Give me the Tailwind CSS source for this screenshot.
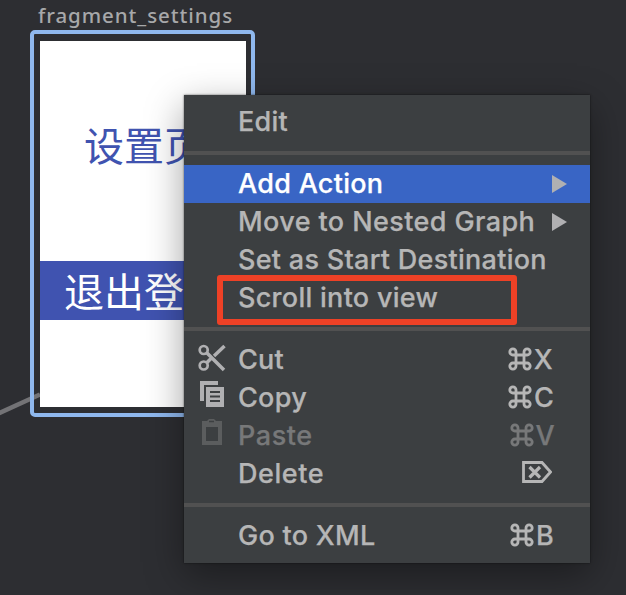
<!DOCTYPE html>
<html lang="en">
<head>
<meta charset="utf-8">
<title>Navigation editor</title>
<script src="https://cdn.jsdelivr.net/npm/@tailwindcss/browser@4"></script>
</head>
<body class="relative h-[595px] w-[626px] overflow-hidden bg-[#2d2e32] font-['Inter','Noto_Sans_CJK_SC',sans-serif]">
<svg class="hidden">
  <symbol id="cmd" viewBox="0 0 24 24"><path d="M8 8V4.900A3.100 3.100 0 1 0 4.900 8H19.100A3.100 3.100 0 1 0 16 4.900V19.100A3.100 3.100 0 1 0 19.100 16H4.900A3.100 3.100 0 1 0 8 19.100Z" fill="none" stroke="currentColor" stroke-width="2.800"/></symbol>
</svg>

<!-- action edge entering the destination -->
<svg class="absolute left-0 top-[380px] h-[50px] w-[50px]" viewBox="0 0 50 50"><path d="M-4 34.500L40 14.500" stroke="#737376" stroke-width="4.500" fill="none"/></svg>

<!-- destination -->
<div class="absolute left-[38px] top-0 h-[30px] whitespace-nowrap font-['Noto_Sans',sans-serif] text-[20.500px] font-medium leading-[30px] tracking-[0.930px] text-[#a7a8aa]">fragment_settings</div>
<div class="absolute left-[30px] top-[30px] h-[387px] w-[225px] rounded-[5px] border-[4px] border-[#8fb8ee] px-[6px] pt-[7px]">
  <div class="flex h-[366px] w-[206px] flex-col overflow-hidden bg-white pt-[80px] font-['Noto_Sans_CJK_SC',sans-serif] text-[40px]">
    <div class="h-[48px] whitespace-nowrap pl-[44px] leading-[46px] text-[#4053b0]">设置页</div>
    <div class="mt-[92px] h-[59px] whitespace-nowrap bg-[#4053b0] pl-[24px] leading-[59px] text-white">退出登录</div>
  </div>
</div>

<!-- context menu -->
<div class="absolute left-[184px] top-[95px] flex h-[468px] w-[406px] flex-col bg-[#3c3f41] py-2 text-[27px] font-medium tracking-[0.280px] text-[#b6b6b6] shadow-[0_12px_36px_rgba(0,0,0,0.38),0_0_2px_rgba(0,0,0,0.6)] [-webkit-text-stroke:0.25px_currentColor]">
  <div class="flex h-[38px] items-center pl-[54px]"><span class="whitespace-nowrap">Edit</span></div>
  <div class="my-[10px] h-1 bg-[#515151]"></div>
  <div class="flex h-[38px] items-center bg-[#3965c5] pl-[54px] pr-[23px] text-white"><span class="whitespace-nowrap">Add Action</span>
    <svg class="ml-auto h-[18px] w-[15px]" viewBox="0 0 15 18"><path d="M0 0L15 9L0 18Z" fill="#b0b0b2"/></svg></div>
  <div class="flex h-[38px] items-center pl-[54px] pr-[23px]"><span class="whitespace-nowrap tracking-[0.400px]">Move to Nested Graph</span>
    <svg class="ml-auto h-[18px] w-[15px]" viewBox="0 0 15 18"><path d="M0 0L15 9L0 18Z" fill="#b0b0b2"/></svg></div>
  <div class="flex h-[38px] items-center pl-[54px]"><span class="whitespace-nowrap">Set as Start Destination</span></div>
  <div class="flex h-[38px] items-center pl-[54px]"><span class="whitespace-nowrap">Scroll into view</span></div>
  <div class="my-[10px] h-1 bg-[#515151]"></div>
  <div class="flex h-[38px] items-center pl-[14px] pr-[37px]">
    <svg class="mb-[5px] mr-[12px] h-[28px] w-[28px] shrink-0" viewBox="0 0 28 28" fill="none" stroke="#b0b0b2"><circle cx="5.700" cy="6" r="4" stroke-width="2.700"/><circle cx="5.700" cy="21.500" r="4" stroke-width="2.700"/><path d="M8.500 8.500L26 26M8.500 19L13 14.500M16 12L26.500 2" stroke-width="3.500"/></svg>
    <span>Cut</span><svg class="mb-[2px] ml-auto mr-[2px] h-[24px] w-[24px]"><use href="#cmd"/></svg><span>X</span></div>
  <div class="flex h-[38px] items-center pl-[14px] pr-[36px]">
    <svg class="mb-[6px] mr-[12px] h-[28px] w-[28px] shrink-0" viewBox="0 0 28 28"><path d="M2 0H20V4H6V20H2Z" fill="#b0b0b2"/><path d="M8 6H26V26H8Z" fill="#b0b0b2"/><path d="M12 11H22M12 15.500H22M12 20H22" stroke="#3c3f41" stroke-width="2"/></svg>
    <span>Copy</span><svg class="mb-[2px] ml-auto mr-[2px] h-[24px] w-[24px]"><use href="#cmd"/></svg><span>C</span></div>
  <div class="flex h-[38px] items-center pl-[14px] pr-[35px] text-[#777879]">
    <svg class="mb-[6px] mr-[12px] h-[28px] w-[28px] shrink-0" viewBox="0 0 28 28"><path d="M4 2H9L11 0H16L18 2H24V26H4ZM8 8V22H20V8Z" fill="#5b5d5e" fill-rule="evenodd"/><path d="M11 2.500H16" stroke="#3c3f41" stroke-width="1.500"/></svg>
    <span class="tracking-[0.550px]">Paste</span><svg class="mb-[2px] ml-auto mr-[2px] h-[24px] w-[24px]"><use href="#cmd"/></svg><span>V</span></div>
  <div class="flex h-[38px] items-center pl-[54px] pr-[38px]"><span class="tracking-[0.550px]">Delete</span>
    <svg class="mb-[4px] ml-auto h-[22px] w-[30px]" viewBox="0 0 30 22" fill="none" stroke="#b6b6b6"><path d="M1.500 1.500H20L28.500 11L20 20.500H1.500Z" stroke-width="2.800"/><path d="M7.500 6L18 16.500M18 6L7.500 16.500" stroke-width="3.200"/></svg></div>
  <div class="my-[10px] h-1 bg-[#515151]"></div>
  <div class="flex h-[38px] items-center pl-[54px] pr-[36px]"><span class="whitespace-nowrap">Go to XML</span><svg class="mb-[2px] ml-auto mr-[2px] h-[24px] w-[24px]"><use href="#cmd"/></svg><span>B</span></div>
</div>

<!-- highlight frame -->
<div class="absolute left-[217px] top-[275px] h-[50px] w-[300px] rounded-[3px] border-[6px] border-[#ee4126]"></div>
</body>
</html>
